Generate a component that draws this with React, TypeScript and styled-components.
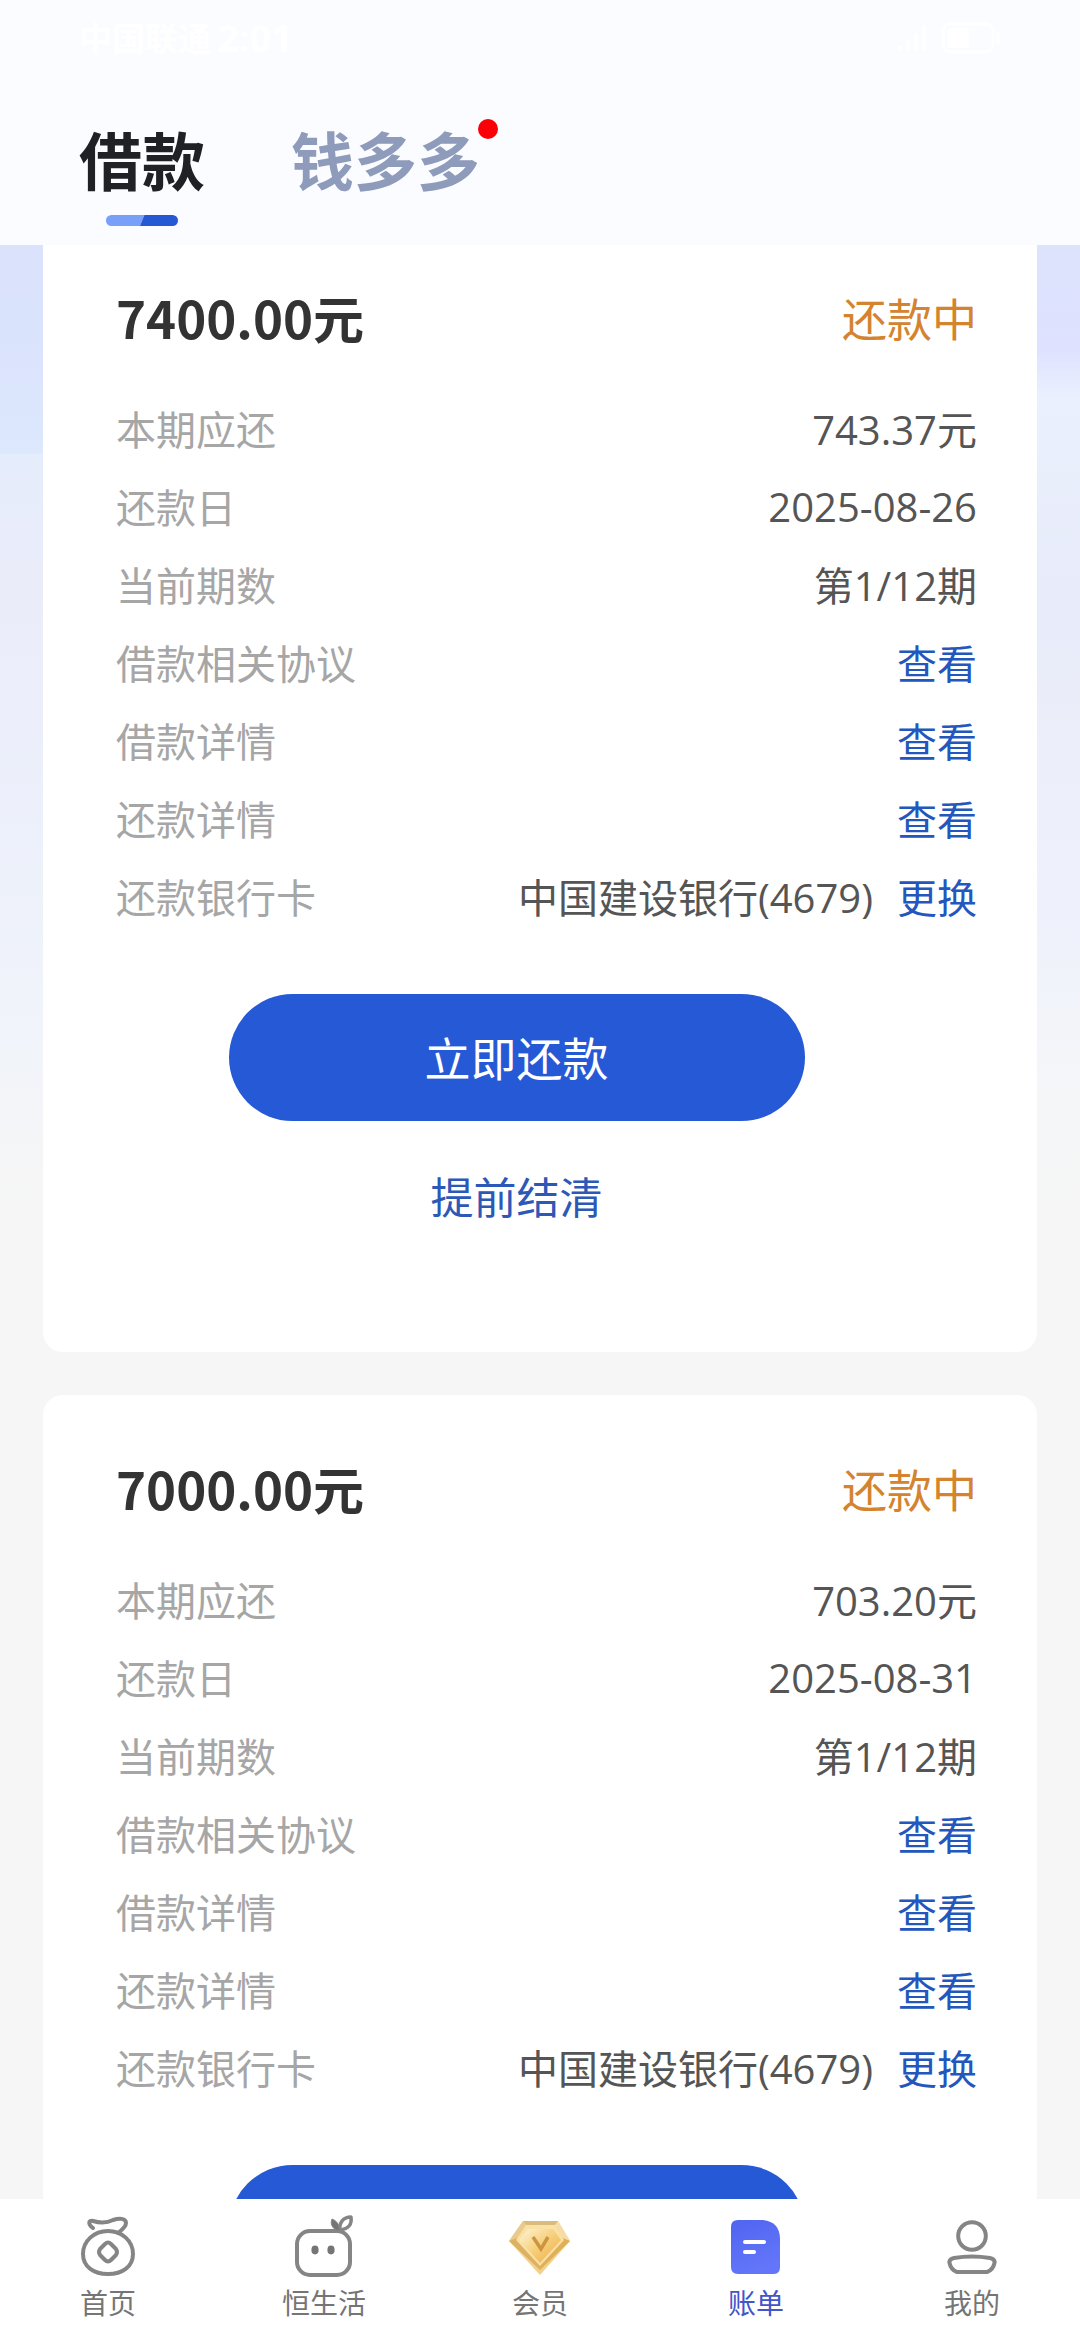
import React, { useState } from 'react';
import styled, { createGlobalStyle } from 'styled-components';

const GlobalStyle = createGlobalStyle`
  * { box-sizing: border-box; }
  body {
    margin: 0;
    background: #f6f6f6;
    font-family: 'Open Sans', 'Noto Sans CJK SC', sans-serif;
  }
  button { font-family: inherit; border: 0; padding: 0; background: none; cursor: pointer; }
  a { text-decoration: none; color: inherit; }
`;

const Page = styled.div`
  display: flex;
  flex-direction: column;
  height: 100vh;
`;

const Header = styled.header`
  position: relative;
  z-index: 1;
  flex: none;
  display: flex;
  flex-direction: column;
  height: 245px;
  background: #fbfcff;
`;

const StatusBar = styled.div`
  display: flex;
  align-items: center;
  justify-content: space-between;
  height: 74px;
  padding: 0 78px 0 79px;
  color: #fff;
  font-weight: 700;
`;

const Carrier = styled.span`
  display: flex;
  align-items: center;
  gap: 6px;
  font-size: 33px;
`;

const Clock = styled.time`
  font-size: 38px;
`;

const StatusIcons = styled.svg`
  width: 122px;
  height: 36px;
`;

const TabRow = styled.nav`
  display: flex;
  gap: 86px;
  padding: 42px 79px 0;
`;

const Tab = styled.button<{ $active: boolean }>`
  position: relative;
  height: 90px;
  line-height: 90px;
  font-size: 63px;
  font-weight: 700;
  color: ${(p) => (p.$active ? '#202124' : '#8f9bbb')};
`;

const TabMark = styled.span`
  position: absolute;
  left: 50%;
  bottom: -20px;
  width: 72px;
  height: 11px;
  margin-left: -36px;
  border-radius: 6px;
  background: linear-gradient(112deg, #78a0f8 50%, #2658d2 51%);
`;

const Dot = styled.span`
  position: absolute;
  right: -18px;
  top: 3px;
  width: 20px;
  height: 20px;
  border-radius: 50%;
  background: #fb0007;
`;

const Main = styled.main`
  flex: 1;
  min-height: 0;
  overflow-y: auto;
  scrollbar-width: none;
  background:
    linear-gradient(#dae2fc 0, #dbe4fc 120px, #dce8fc 208px, #e5ecfb 209px, #ebecfa 338px, #ecf0fb 566px, #f1f4fa 800px, #f6f6f6 960px) left / 50% 100% no-repeat,
    linear-gradient(#dde3fd 0, #dee1ff 102px, #eaf0fd 152px, #e8ebf9 380px, #eceff9 495px, #eef1fc 660px, #f5f6f8 850px, #f6f6f6 960px) right / 50% 100% no-repeat;
`;

const List = styled.div`
  display: flex;
  flex-direction: column;
  gap: 43px;
  margin-top: -21px;
  padding: 0 43px 43px;
`;

const Card = styled.section`
  padding: 56px 60px 123px 73px;
  border-radius: 20px;
  background: #fff;
`;

const CardHead = styled.div`
  display: flex;
  align-items: center;
  justify-content: space-between;
  height: 74px;
  margin-bottom: 35px;
`;

const Amount = styled.h2`
  margin: 0;
  font-family: 'Noto Sans CJK SC', sans-serif;
  font-size: 51px;
  font-weight: 700;
  color: #333;
`;

const State = styled.span`
  font-size: 45px;
  color: #d4832f;
`;

const Rows = styled.dl`
  margin: 0;
`;

const Row = styled.div`
  display: flex;
  align-items: center;
  justify-content: space-between;
  height: 78px;
  font-size: 40px;
`;

const Label = styled.dt`
  color: #a6a6a6;
`;

const Value = styled.dd`
  display: flex;
  gap: 24px;
  margin: 0;
  color: #555;
`;

const Link = styled.a`
  color: #2457bd;
`;

const Actions = styled.div`
  display: flex;
  flex-direction: column;
  align-items: center;
  gap: 46px;
  padding: 59px 60px 0 0;
`;

const PayButton = styled.button`
  width: 576px;
  max-width: 100%;
  height: 127px;
  padding-bottom: 4px;
  border-radius: 64px;
  background: #2659d6;
  color: #fff;
  font-size: 46px;
`;

const SettleButton = styled.button`
  height: 62px;
  line-height: 62px;
  font-size: 43px;
  color: #2c58b8;
`;

const BottomNav = styled.nav`
  flex: none;
  display: grid;
  grid-template-columns: repeat(5, 1fr);
  height: 141px;
  background: #fff;
`;

const NavItem = styled.a<{ $active: boolean }>`
  display: flex;
  flex-direction: column;
  align-items: center;
  padding-top: 14px;
  gap: 2px;
  font-size: 28px;
  line-height: 44px;
  color: ${(p) => (p.$active ? '#4355c8' : '#757575')};
`;

const Icon = styled.svg`
  width: 70px;
  height: 66px;
  fill: none;
  stroke: #858585;
  stroke-width: 4;
  stroke-linecap: round;
  stroke-linejoin: round;
`;

const HomeIcon = () => (
  <Icon viewBox="0 0 70 66">
    <path d="M35 18C49 18 60 28 60 41C60 54 49 61 35 61C21 61 10 54 10 41C10 28 21 18 35 18Z" />
    <path d="M20 15C15 11 15 7 20 8C27 10 34 10 40 7C46 5 53 5 53 10C53 13 49 17 45 20" />
    <path d="M32 31q3-3 6 0l5 5q2 3 0 6l-5 5q-3 3-6 0l-5-5q-2-3 0-6z" />
  </Icon>
);

const LifeIcon = () => (
  <Icon viewBox="0 0 70 66">
    <rect x="8" y="18" width="53" height="44" rx="13" />
    <ellipse cx="26" cy="37" rx="3.6" ry="4.4" fill="#757575" stroke="none" />
    <ellipse cx="42" cy="37" rx="3.6" ry="4.4" fill="#757575" stroke="none" />
    <path d="M51 17C50 10 54 4 62 4C63 11 60 16 51 17Z" strokeWidth="3.5" />
    <path d="M50 18C43 16 41 11 43 6C48 8 51 12 50 18Z" fill="#757575" strokeWidth="1" />
  </Icon>
);

const MemberIcon = () => (
  <Icon viewBox="0 0 70 66">
    <defs>
      <linearGradient id="gem" x1="0" y1="0" x2="1" y2="1">
        <stop offset="0.15" stopColor="#fbe9bd" />
        <stop offset="0.5" stopColor="#f6cf79" />
        <stop offset="0.85" stopColor="#efb55a" />
      </linearGradient>
    </defs>
    <g stroke="none">
      <path d="M18 8H53L65 28L35 62L4 28Z" fill="#f3d08a" />
      <path d="M18 8H53L50 12H21Z" fill="#d9bb7c" />
      <path d="M4 28L18 8L21 12L12 26Z" fill="#e8ca8c" />
      <path d="M65 28L53 8L50 12L58 26Z" fill="#f5dca6" />
      <path d="M4 28L12 25L35 52V57Z" fill="#dbb163" />
      <path d="M65 28L58 25L35 52V57Z" fill="#e0b058" />
      <path d="M21 12H50L59 27L35 53L11 27Z" fill="#fae0a2" />
      <path d="M23 16H48L56 27L35 50L14 27Z" fill="url(#gem)" />
    </g>
    <path d="M28 24L36 36L43 24" stroke="#cc9540" strokeWidth="3.5" strokeLinecap="butt" strokeLinejoin="miter" />
  </Icon>
);

const BillIcon = () => (
  <Icon viewBox="0 0 70 66">
    <defs>
      <linearGradient id="bill" x1="0" y1="0" x2="0.4" y2="1">
        <stop offset="0" stopColor="#4f64f0" />
        <stop offset="1" stopColor="#6376fa" />
      </linearGradient>
    </defs>
    <path d="M17 7H42Q59 9 59 26V54Q59 61 53 61H17Q10 61 10 54V14Q10 7 17 7Z" fill="url(#bill)" stroke="none" />
    <path d="M24 29H43M24 39H33" stroke="#fff" />
  </Icon>
);

const MineIcon = () => (
  <Icon viewBox="0 0 70 66">
    <circle cx="35" cy="23" r="13.8" />
    <path d="M17 45Q35 42 53 45Q58 46 57.500 50Q56 57 50 59H20Q14 57 12.500 50Q12 46 17 45Z" />
  </Icon>
);

const loans = [
  { id: 'a', amount: '7400.00元', due: '743.37元', date: '2025-08-26' },
  { id: 'b', amount: '7000.00元', due: '703.20元', date: '2025-08-31' },
];

const navItems = [
  { label: '首页', Glyph: HomeIcon },
  { label: '恒生活', Glyph: LifeIcon },
  { label: '会员', Glyph: MemberIcon },
  { label: '账单', Glyph: BillIcon },
  { label: '我的', Glyph: MineIcon },
];

type Loan = (typeof loans)[number];

function LoanCard({ loan }: { loan: Loan }) {
  return (
    <Card>
      <CardHead>
        <Amount>{loan.amount}</Amount>
        <State>还款中</State>
      </CardHead>
      <Rows>
        <Row><Label>本期应还</Label><Value>{loan.due}</Value></Row>
        <Row><Label>还款日</Label><Value>{loan.date}</Value></Row>
        <Row><Label>当前期数</Label><Value>第1/12期</Value></Row>
        {['借款相关协议', '借款详情', '还款详情'].map((name) => (
          <Row key={name}>
            <Label>{name}</Label>
            <Value><Link href="#">查看</Link></Value>
          </Row>
        ))}
        <Row>
          <Label>还款银行卡</Label>
          <Value><span>中国建设银行(4679)</span><Link href="#">更换</Link></Value>
        </Row>
      </Rows>
      <Actions>
        <PayButton type="button">立即还款</PayButton>
        <SettleButton type="button">提前结清</SettleButton>
      </Actions>
    </Card>
  );
}

export default function App() {
  const [tab, setTab] = useState('借款');
  return (
    <Page>
      <GlobalStyle />
      <Header>
        <StatusBar>
          <Carrier>中国联通<Clock>2:01</Clock></Carrier>
          <StatusIcons viewBox="0 0 122 36" fill="#fff">
            <path d="M18 27h4v5h-4zM26 21h4v11h-4zM34 14h4v18h-4zM42 6h4v26h-4z" />
            <rect x="63" y="5" width="50" height="28" rx="7" fill="none" stroke="#fff" strokeWidth="3" />
            <rect x="67" y="9" width="22" height="20" rx="4" />
            <rect x="116" y="13" width="4" height="12" rx="2" />
          </StatusIcons>
        </StatusBar>
        <TabRow>
          <Tab type="button" $active={tab === '借款'} onClick={() => setTab('借款')}>
            借款{tab === '借款' && <TabMark />}
          </Tab>
          <Tab type="button" $active={tab === '钱多多'} onClick={() => setTab('钱多多')}>
            钱多多<Dot />{tab === '钱多多' && <TabMark />}
          </Tab>
        </TabRow>
      </Header>
      <Main>
        <List>
          {loans.map((loan) => <LoanCard key={loan.id} loan={loan} />)}
        </List>
      </Main>
      <BottomNav>
        {navItems.map(({ label, Glyph }) => (
          <NavItem key={label} href="#" $active={label === '账单'}>
            <Glyph />
            {label}
          </NavItem>
        ))}
      </BottomNav>
    </Page>
  );
}
